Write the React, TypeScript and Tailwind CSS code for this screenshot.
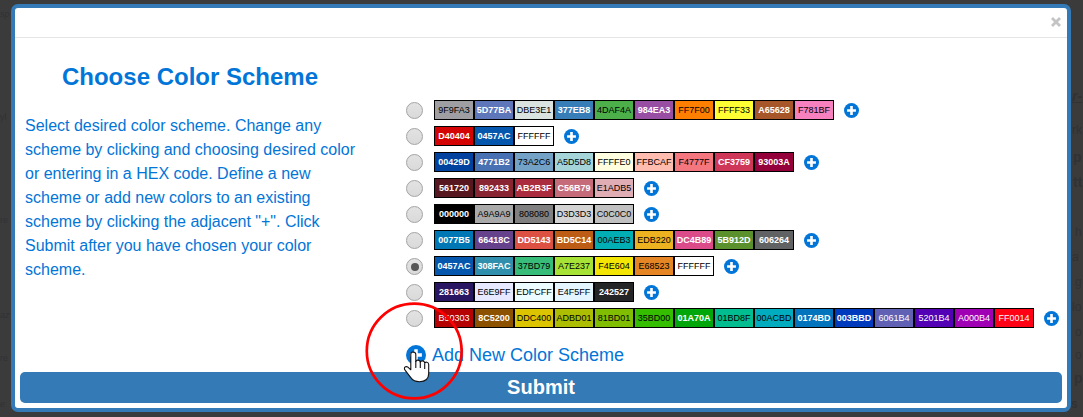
import React from "react";

type Swatch = [hex: string, light?: boolean, bold?: boolean];

const parse = (s: string): Swatch[] =>
  s.split(" ").map((t) => [t.replace(/[*+]/g, ""), /[*+]/.test(t), t.endsWith("*")]);

// "*" marks bold white labels, "+" regular white labels
const schemes: Swatch[][] = [
  "9F9FA3 5D77BA* DBE3E1 377EB8* 4DAF4A 984EA3* FF7F00 FFFF33 A65628* F781BF",
  "D40404* 0457AC* FFFFFF",
  "00429D* 4771B2* 73A2C6 A5D5D8 FFFFE0 FFBCAF F4777F CF3759* 93003A*",
  "561720* 892433* AB2B3F* C56B79* E1ADB5",
  "000000* A9A9A9 808080 D3D3D3 C0C0C0",
  "0077B5* 66418C* DD5143* BD5C14* 00AEB3 EDB220 DC4B89* 5B912D* 606264*",
  "0457AC* 308FAC* 37BD79 A7E237 F4E604 E68523 FFFFFF",
  "281663* E6E9FF EDFCFF E4F5FF 242527*",
  "B50303+ 8C5200* DDC400 ADBD01 81BD01 35BD00 01A70A* 01BD8F 00ACBD 0174BD* 003BBD* 6061B4+ 5201B4+ A000B4+ FF0014+",
].map(parse);

function Plus({ size }: { size: number }) {
  return (
    <svg width={size} height={size} viewBox="0 0 16 16" className="block shrink-0">
      <circle cx="8" cy="8" r="8" fill="#0275d8" />
      <path d="M6.6 3.3h2.8v3.3h3.3v2.8H9.4v3.3H6.6V9.4H3.3V6.6h3.3z" fill="#fff" />
    </svg>
  );
}

function Radio({ checked }: { checked: boolean }) {
  return (
    <span className="mt-px flex size-[17px] shrink-0 items-center justify-center rounded-full border border-[#a3a3a3] bg-linear-to-b from-[#e2e2e2] to-[#dadada]">
      {checked && <span className="size-2 rounded-full bg-[#555]" />}
    </span>
  );
}

function SchemeRow({ swatches, checked }: { swatches: Swatch[]; checked: boolean }) {
  return (
    <div className="flex h-[26px] items-center">
      <Radio checked={checked} />
      <div className="ml-[11px] flex h-5">
        {swatches.map(([hex, light, bold], i) => (
          <span
            key={i}
            style={{ backgroundColor: "#" + hex }}
            className={
              "flex h-5 w-10 items-center justify-center border border-black text-[9px] leading-none " +
              (light ? "text-white " : "text-black ") +
              (bold ? "font-bold" : "")
            }
          >
            {hex}
          </span>
        ))}
      </div>
      <div className="ml-[10px] pt-px">
        <Plus size={15} />
      </div>
    </div>
  );
}

// Dimmed page text showing past the dialog's edges
const ghosts: [string, string][] = [
  ["sp", "left-0 top-[6px] text-[9px] italic"],
  ["yl", "left-0 top-[109px] text-[9px]"],
  ["re", "left-0 top-[212px] text-[9px]"],
  ["az", "left-0 top-[307px] text-[9px] italic"],
  ["re", "left-0 top-[350px] text-[9px]"],
  ["e", "left-0 top-[396px] text-[9px]"],
  ["r-", "left-[1072px] top-[88px] text-[14px] font-bold italic underline"],
  ["rk", "left-[1072px] top-[122px] text-[12px]"],
  ["p", "left-[1073px] top-[149px] text-[14px] font-bold"],
  ["tt", "left-[1073px] top-[174px] text-[14px] font-bold"],
  ["h", "left-[1075px] top-[224px] text-[12px]"],
  ["a", "left-[1072px] top-[249px] text-[12px]"],
  ["g", "left-[1075px] top-[274px] text-[12px]"],
  ["lo", "left-[1072px] top-[299px] text-[12px]"],
  ["o", "left-[1075px] top-[324px] text-[12px]"],
  ["o", "left-[1075px] top-[347px] text-[12px]"],
  ["p", "left-[1074px] top-[370px] text-[14px] font-bold"],
  ["s", "left-[1071px] top-[396px] text-[12px] font-bold"],
];

export default function App() {
  return (
    <div className="relative h-[417px] w-[1083px] overflow-hidden bg-[#3b3b3b] pt-1 pl-[11px] font-['Liberation_Sans',Arial,sans-serif]">
      {ghosts.map(([t, pos], i) => (
        <span key={i} className={"absolute leading-[16px] text-[#303235] " + pos}>
          {t}
        </span>
      ))}
      <div className="relative flex h-[408px] w-[1060px] flex-col rounded-[7px] border-4 border-[#337ab7] bg-white">
        <div className="flex h-[30px] shrink-0 items-start justify-end border-b border-[#e5e5e5] pt-[9px] pr-[6px]">
          <svg width="10" height="10" viewBox="0 0 10 10">
            <path d="M1 1l8 8M9 1l-8 8" stroke="#c4c4c4" strokeWidth="2.8" />
          </svg>
        </div>
        <div className="flex h-[334px] shrink-0">
          <div className="w-[391px] pl-[10px] text-[#0275d8]">
            <h2 className="mt-[24px] w-[330px] text-center text-[24px] leading-[30px] font-bold">
              Choose Color Scheme
            </h2>
            <p className="mt-[22px] w-[335px] text-[16px] leading-6">
              Select desired color scheme. Change any scheme by clicking and choosing desired color or entering in a HEX
              code. Define a new scheme or add new colors to an existing scheme by clicking the adjacent "+". Click
              Submit after you have chosen your color scheme.
            </p>
          </div>
          <div className="pt-[59px]">
            {schemes.map((s, i) => (
              <SchemeRow key={i} swatches={s} checked={i === 6} />
            ))}
            <div className="mt-[12px] flex h-6 items-center text-[18px] leading-6 text-[#0275d8]">
              <Plus size={20} />
              <span className="ml-[6px]">Add New Color Scheme</span>
            </div>
          </div>
        </div>
        <button className="mx-[5px] h-[31px] shrink-0 rounded-[5px] bg-[#337ab7] pb-px text-center text-[20px] leading-[30px] font-bold text-white">
          Submit
        </button>
      </div>
      <svg width="100" height="100" viewBox="0 0 100 100" className="absolute top-[301px] left-[364px]">
        <circle cx="50.2" cy="50" r="47.4" fill="none" stroke="#f00" strokeWidth="2.7" />
        <path
          d="M48.8 51c-1.4.1-2 1-2 2.4v15.4l-2.9-2.6c-1.4-1.2-3.6-.4-3.5 1.3 0 .8.5 1.5 1 2.1l5.4 7c1.6 2.3 4 4.1 8.7 4.1 6.2 0 9.2-3.2 9.2-8.4v-8.8c0-2.7-3.6-3-4-1.2 0-2.8-3.8-3.2-4.4-1.1-.2-2.5-3.9-2.8-4.5-.7v-7.1c0-1.6-1-2.4-3-2.4z"
          fill="#fff"
          stroke="#111"
          strokeWidth="1.1"
          strokeLinejoin="round"
        />
        <path d="M51.8 60v7M56.3 61v6M60.7 62.5v5.5" stroke="#111" strokeWidth="1.1" fill="none" />
      </svg>
    </div>
  );
}
